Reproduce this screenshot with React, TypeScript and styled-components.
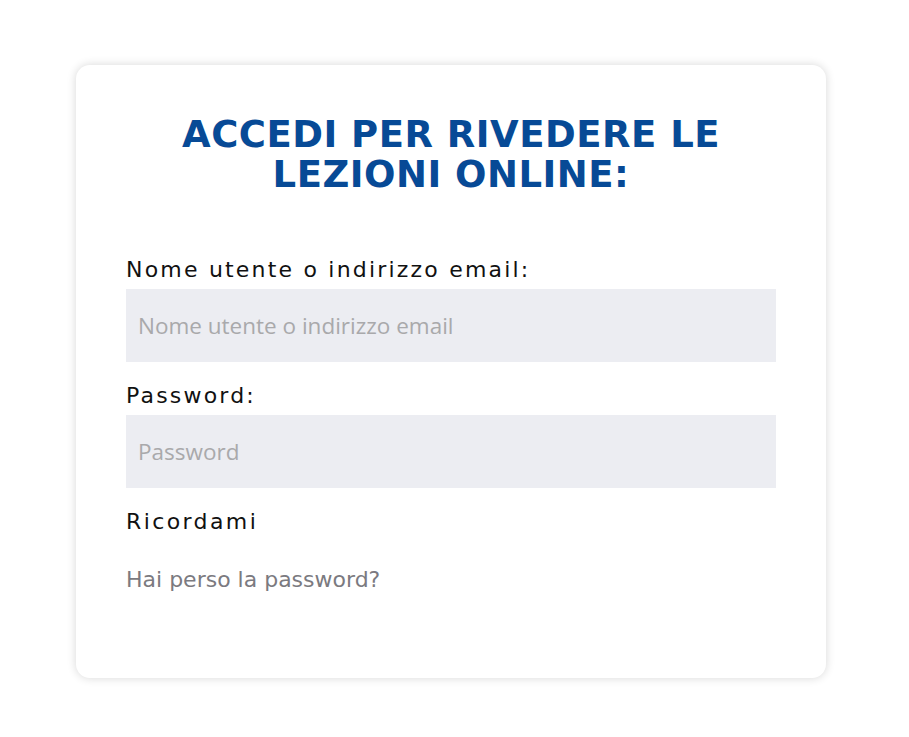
import React from "react";
import styled, { createGlobalStyle } from "styled-components";

const Global = createGlobalStyle`
  html, body { margin: 0; padding: 0; background: #ffffff; }
  * { box-sizing: border-box; }
`;

const Page = styled.div`
  padding: 65px 0 40px 76px;
`;

const Card = styled.div`
  width: 750px;
  height: 613px;
  background: #ffffff;
  border-radius: 14px;
  box-shadow: 0 0 10px rgba(0, 0, 0, 0.16);
  padding: 50px 50px 0 50px;
`;

const Title = styled.h2`
  margin: 0 0 62px 0;
  text-align: center;
  font-family: "DejaVu Sans", sans-serif;
  font-weight: 700;
  font-size: 37px;
  line-height: 40px;
  letter-spacing: 0.5px;
  color: #074a96;
`;

const Form = styled.form`
  display: flex;
  flex-direction: column;
`;

const Label = styled.label`
  display: block;
  font-family: "DejaVu Sans", sans-serif;
  font-size: 22px;
  line-height: 26px;
  letter-spacing: 2.2px;
  color: #111111;
  margin-bottom: 6px;
`;

const Field = styled.div<{ $gap: number }>`
  margin-bottom: ${(p) => p.$gap}px;
`;

const Input = styled.input`
  display: block;
  width: 100%;
  height: 73px;
  border: none;
  outline: none;
  background: #ecedf2;
  padding: 0 12px;
  font-family: "Open Sans", sans-serif;
  font-size: 22.5px;
  color: #333;
  &::placeholder { color: #a9a9ab; }
`;

const Remember = styled.div`
  font-family: "DejaVu Sans", sans-serif;
  font-size: 22px;
  line-height: 26px;
  letter-spacing: 2.4px;
  color: #111111;
  margin-bottom: 32px;
`;

const Lost = styled.a`
  display: block;
  font-family: "DejaVu Sans", sans-serif;
  font-size: 22px;
  line-height: 26px;
  color: #7b7a80;
  text-decoration: none;
`;

export default function App() {
  return (
    <>
      <Global />
      <Page>
        <Card>
          <Title>
            ACCEDI PER RIVEDERE LE
            <br />
            LEZIONI ONLINE:
          </Title>
          <Form onSubmit={(e) => e.preventDefault()}>
            <Field $gap={21}>
              <Label>Nome utente o indirizzo email:</Label>
              <Input type="text" placeholder="Nome utente o indirizzo email" />
            </Field>
            <Field $gap={21}>
              <Label>Password:</Label>
              <Input type="password" placeholder="Password" />
            </Field>
            <Remember>Ricordami</Remember>
            <Lost href="#">Hai perso la password?</Lost>
          </Form>
        </Card>
      </Page>
    </>
  );
}
